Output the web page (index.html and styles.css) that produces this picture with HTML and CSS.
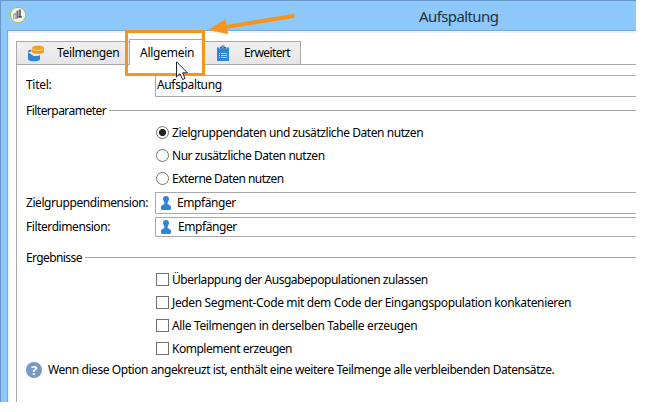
FILE: index.html
```
<!DOCTYPE html>
<html lang="de">
<head>
<meta charset="utf-8">
<title>Aufspaltung</title>
<link rel="stylesheet" href="styles.css">
</head>
<body>
<div class="window">
  <header class="titlebar">
    <svg class="app-icon" width="18" height="18" viewBox="0 0 18 18">
      <circle cx="9" cy="9" r="7.700" fill="#f1f2ef" stroke="#9cc746" stroke-width="1"/>
      <path d="M4 8.500l3.500-2.500v6.500L4 13.500z" fill="#a2a2a2"/>
      <path d="M7.500 5l2-1v8l-2 1z" fill="#707070"/>
      <path d="M11 3.500v7.500M9.500 11h3.500" fill="none" stroke="#222" stroke-width="1.200"/>
      <path d="M5.700 9v3.500" stroke="#fff" stroke-width=".8"/>
    </svg>
    <h1 class="window-title">Aufspaltung</h1>
  </header>
  <main class="client">
    <nav class="tabs">
      <div class="tab tab-subsets">
        <svg class="tab-icon" width="17" height="17" viewBox="0 0 17 17">
          <path d="M0 7.500v6.400c0 1.400 2.700 2.300 6 2.300s6-.9 6-2.300v-3.600c-4 1.300-8 .5-9-1.400z" fill="#2f86d6"/>
          <path d="M0 6.300c.3-1 1.800-1.600 3.400-1.700v2.200c-1.600 0-2.800.3-3.400 1z" fill="#2f86d6"/>
          <path d="M4 3v3.700c0 1.200 2.700 2.100 6 2.100s6-.9 6-2.100V3z" fill="#ee9b1c"/>
          <ellipse cx="10" cy="2.800" rx="6" ry="2.300" fill="#f4a321"/>
          <path d="M4.100 3.500c.5 1.300 3 2 5.900 2s5.400-.7 5.900-2" fill="none" stroke="#fbe0b2" stroke-width=".8"/>
        </svg>
        <span class="t-subsets">Teilmengen</span>
      </div>
      <div class="tab tab-active"><span class="t-general">Allgemein</span></div>
      <div class="tab tab-advanced">
        <svg class="tab-icon" width="12" height="16" viewBox="0 0 12 16">
          <path d="M0 2.500h2.500V4h7V2.500H12V16H0z" fill="#2f86d6"/>
          <path d="M3 3.800V2h1.500V.5h3V2H9v1.800z" fill="#1e68b0"/>
          <path d="M5.300 1.500h1.400v1H5.300z" fill="#fff"/>
          <path d="M2 8.500h1M4 8.500h6M2 10.500h1M4 10.500h6M2 12.500h1M4 12.500h6" stroke="#a9d2f5" stroke-width="1"/>
        </svg>
        <span class="t-advanced">Erweitert</span>
      </div>
    </nav>
    <section class="pane">
      <div class="row row-title">
        <label class="label l-titel">Titel:</label>
        <div class="field"><span class="v-title">Aufspaltung</span></div>
      </div>
      <div class="group group-filter"><span class="g-filter">Filterparameter</span></div>
      <div class="option"><i class="radio radio-on"></i><span class="o1">Zielgruppendaten und zusätzliche Daten nutzen</span></div>
      <div class="option"><i class="radio"></i><span class="o2">Nur zusätzliche Daten nutzen</span></div>
      <div class="option"><i class="radio"></i><span class="o3">Externe Daten nutzen</span></div>
      <div class="row row-target">
        <label class="label l-target">Zielgruppendimension:</label>
        <div class="field field-icon">
          <svg class="person" width="10" height="14" viewBox="0 0 10 14"><path d="M5 0c1.900 0 3 1.300 3 3 0 1.400-.8 2.300-1.300 3v2.200c2 .5 3.300 1.300 3.300 3V13l-1 1H1l-1-1v-1.800c0-1.700 1.300-2.500 3.300-3V6C2.800 5.300 2 4.400 2 3c0-1.700 1.100-3 3-3z" fill="#2f86d6"/></svg>
          <span class="v-emp">Empfänger</span>
        </div>
      </div>
      <div class="row row-filter">
        <label class="label l-filter">Filterdimension:</label>
        <div class="field field-icon field-wide">
          <svg class="person" width="10" height="14" viewBox="0 0 10 14"><path d="M5 0c1.900 0 3 1.300 3 3 0 1.400-.8 2.300-1.300 3v2.200c2 .5 3.300 1.300 3.300 3V13l-1 1H1l-1-1v-1.800c0-1.700 1.300-2.500 3.300-3V6C2.800 5.300 2 4.400 2 3c0-1.700 1.100-3 3-3z" fill="#2f86d6"/></svg>
          <span class="v-emp">Empfänger</span>
        </div>
      </div>
      <div class="group group-results"><span class="g-results">Ergebnisse</span></div>
      <div class="option"><i class="check"></i><span class="c1">Überlappung der Ausgabepopulationen zulassen</span></div>
      <div class="option"><i class="check"></i><span class="c2">Jeden Segment-Code mit dem Code der Eingangspopulation konkatenieren</span></div>
      <div class="option"><i class="check"></i><span class="c3">Alle Teilmengen in derselben Tabelle erzeugen</span></div>
      <div class="option"><i class="check"></i><span class="c4">Komplement erzeugen</span></div>
      <div class="hint"><i class="help">?</i><span class="hint-text">Wenn diese Option angekreuzt ist, enthält eine weitere Teilmenge alle verbleibenden Datensätze.</span></div>
    </section>
  </main>
  <div class="highlight"></div>
  <svg class="arrow" width="90" height="26" viewBox="0 0 90 26">
    <path d="M86.500 4.700L18 16" stroke="#f7941e" stroke-width="4" fill="none"/>
    <path d="M0 19L17.500 8L20 23z" fill="#f7941e"/>
  </svg>
  <svg class="cursor" width="13" height="20" viewBox="0 0 13 20">
    <path d="M.5.800v15.200l3.500-3.400 2.600 5.900 2.500-1.100-2.500-5.600h4.900z" fill="#fff" stroke="#222233" stroke-width="1"/>
  </svg>
</div>
</body>
</html>
```

FILE: styles.css
```
* { box-sizing: border-box; }
body {
  margin: 0;
  background: #fff;
  color: #000;
  font: 12px/16px "Noto Sans", "Open Sans", sans-serif;
  letter-spacing: -0.43px;
}
span, label, h1 { white-space: nowrap; }
.window {
  position: relative;
  width: 636px;
  height: 402px;
  overflow: hidden;
  background: #8cc8fa;
  border-top: 1px solid #6898c8;
  border-left: 1px solid #6898c8;
}
.titlebar {
  display: flex;
  align-items: center;
  height: 29px;
  padding-left: 8px;
}
.app-icon { flex: none; margin-top: -1px; }
.window-title {
  margin: 1px 0 0 392px;
  font-size: 15px;
  line-height: 20px;
  font-weight: 400;
  letter-spacing: -0.6px;
  color: #2a2f35;
}
.client {
  height: 372px;
  margin-left: 6px;
  padding: 2px 0 0 2px;
  border-top: 1px solid #76a9d8;
  border-left: 1px solid #76a9d8;
  background: #fff;
  box-shadow: inset 2px 2px 0 #f2f2f2;
}
.tabs {
  display: flex;
  align-items: flex-end;
  height: 31px;
  padding-left: 6px;
}
.tab {
  display: flex;
  align-items: center;
  height: 23px;
  border: 1px solid #a8a8ad;
  border-bottom: 0;
  background: linear-gradient(#f0f0f0, #e6e6e6);
}
.tab-subsets { width: 113px; padding-left: 11px; border-right: 0; }
.tab-active {
  position: relative;
  width: 76px;
  height: 26px;
  margin-bottom: -1px;
  padding: 1px 0 0 10px;
  background: #fff;
}
.tab-advanced { width: 96px; padding-left: 12px; border-left: 0; }
.tab-icon { flex: none; }
.t-subsets { margin-left: 12px; letter-spacing: -0.35px; }
.t-general { letter-spacing: -0.25px; }
.t-advanced { margin-left: 15px; letter-spacing: -0.6px; }
.pane {
  height: 339px;
  margin-left: 6px;
  padding: 10px 0 0 9px;
  border-top: 1px solid #a8a8ad;
  border-left: 1px solid #a8a8ad;
}
.row { display: flex; align-items: center; height: 22px; }
.row-title .label, .row-title span { margin-top: -2px; }
.row-target { margin-top: 2px; }
.row-filter { height: 20px; margin-top: 3px; }
.label { flex: none; width: 129px; }
.l-titel { letter-spacing: -0.3px; }
.field {
  flex: 1;
  display: flex;
  align-items: center;
  height: 100%;
  padding-left: 1px;
  border: 1px solid #a8a8ad;
  border-right: 0;
}
.field-icon { padding-left: 5px; gap: 6px; }
.field-wide { gap: 7px; }
.v-title { letter-spacing: -0.36px; }
.group { display: flex; align-items: center; gap: 3px; }
.group::after { content: ""; flex: 1; height: 1px; background: #a0a0a0; }
.group-filter { height: 24px; padding-top: 3px; }
.group-results { height: 31px; padding-top: 10px; }
.g-filter { letter-spacing: -0.53px; }
.g-results { letter-spacing: -0.6px; }
.option { display: flex; align-items: center; gap: 3px; height: 23px; padding-left: 130px; }
.o2 { letter-spacing: -0.46px; }
.o3 { letter-spacing: -0.54px; }
.c1 { letter-spacing: -0.47px; }
.c2, .c3 { letter-spacing: -0.36px; }
.c4 { letter-spacing: -0.48px; }
.radio, .check { flex: none; width: 13px; height: 13px; border: 1px solid #707070; background: #fff; }
.radio { border-radius: 50%; }
.radio-on { background: radial-gradient(circle, #222 3.200px, #fff 3.900px); }
.hint { display: flex; align-items: center; gap: 6px; height: 20px; }
.help {
  flex: none;
  width: 16px;
  height: 16px;
  border-radius: 50%;
  background: #7799c8;
  color: #fff;
  font: 700 13px/16px "Noto Sans", sans-serif;
  letter-spacing: 0;
  text-align: center;
}
.highlight {
  position: absolute;
  left: 124px;
  top: 29px;
  width: 80px;
  height: 46px;
  border: 3px solid #f7941e;
}
.arrow { position: absolute; left: 207px; top: 10px; }
.cursor { position: absolute; left: 175px; top: 60px; }
```
